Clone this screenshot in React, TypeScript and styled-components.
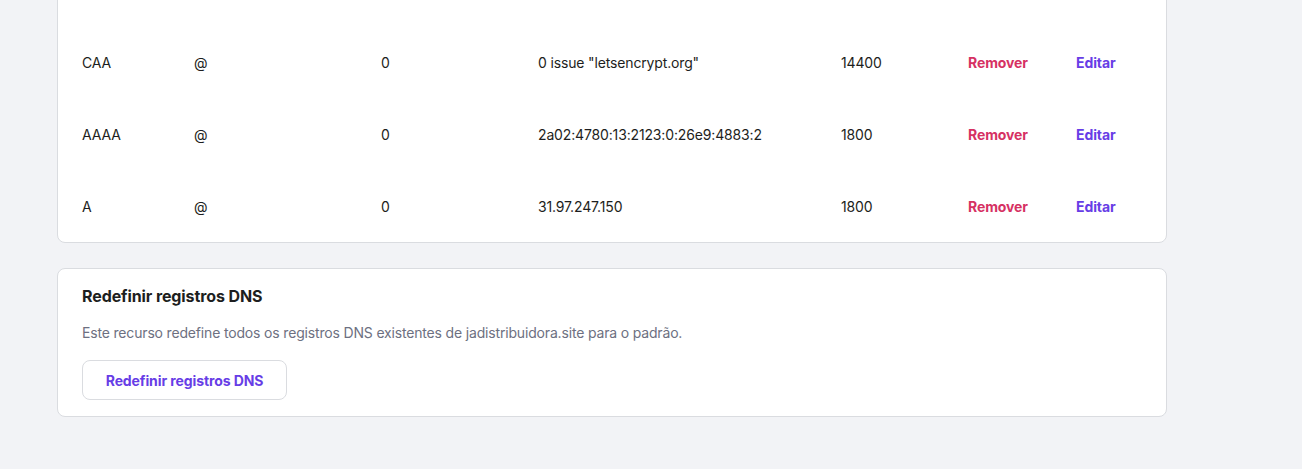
import React from "react";
import styled, { createGlobalStyle } from "styled-components";

const Global = createGlobalStyle`
  html, body { margin: 0; padding: 0; background: #f2f3f6; }
  body { font-family: "Inter", "Noto Sans", sans-serif; color: #1d1e20; overflow: hidden; }
`;

const Page = styled.div`
  width: 1302px;
  height: 469px;
  padding: 0 135px 0 57px;
  box-sizing: border-box;
  display: flex;
  flex-direction: column;
  gap: 25px;
`;

const Card = styled.div<{ $cut?: boolean }>`
  width: 1110px;
  box-sizing: border-box;
  background: #fff;
  border: 1px solid #dadce0;
  border-radius: 8px;
  margin-top: ${(p) => (p.$cut ? "-12px" : "0")};
  padding: ${(p) => (p.$cut ? "37px 24px 0" : "17px 24px 16px")};
`;

const Row = styled.div`
  display: grid;
  grid-template-columns: 112px 187px 157px 303px 127px 108px 1fr;
  align-items: center;
  height: 72px;
  font-size: 14px;
  letter-spacing: -0.15px;
  color: #1d1e20;
`;

const Action = styled.span<{ $tone: "danger" | "primary" }>`
  font-weight: 700;
  letter-spacing: -0.1px;
  color: ${(p) => (p.$tone === "danger" ? "#d63163" : "#673de6")};
`;

const Title = styled.h3`
  margin: 0;
  font-size: 16px;
  line-height: 20px;
  font-weight: 700;
  letter-spacing: -0.1px;
  color: #1d1e20;
`;

const Desc = styled.p`
  margin: 17px 0 0;
  font-size: 14px;
  line-height: 20px;
  letter-spacing: -0.17px;
  color: #6d7081;
`;

const Button = styled.button`
  display: block;
  margin-top: 17px;
  height: 40px;
  width: 205px;
  border: 1px solid #dadce0;
  border-radius: 8px;
  background: #fff;
  color: #673de6;
  font-family: inherit;
  font-size: 14px;
  font-weight: 700;
  letter-spacing: -0.1px;
  cursor: pointer;
`;

const rows = [
  ["CAA", "@", "0", '0 issue "letsencrypt.org"', "14400"],
  ["AAAA", "@", "0", "2a02:4780:13:2123:0:26e9:4883:2", "1800"],
  ["A", "@", "0", "31.97.247.150", "1800"],
];

export default function App() {
  return (
    <>
      <Global />
      <Page>
        <Card $cut>
          {rows.map((r, i) => (
            <Row key={i}>
              {r.map((c, j) => (
                <span key={j}>{c}</span>
              ))}
              <Action $tone="danger">Remover</Action>
              <Action $tone="primary">Editar</Action>
            </Row>
          ))}
        </Card>
        <Card>
          <Title>Redefinir registros DNS</Title>
          <Desc>
            Este recurso redefine todos os registros DNS existentes de jadistribuidora.site para o padrão.
          </Desc>
          <Button>Redefinir registros DNS</Button>
        </Card>
      </Page>
    </>
  );
}
